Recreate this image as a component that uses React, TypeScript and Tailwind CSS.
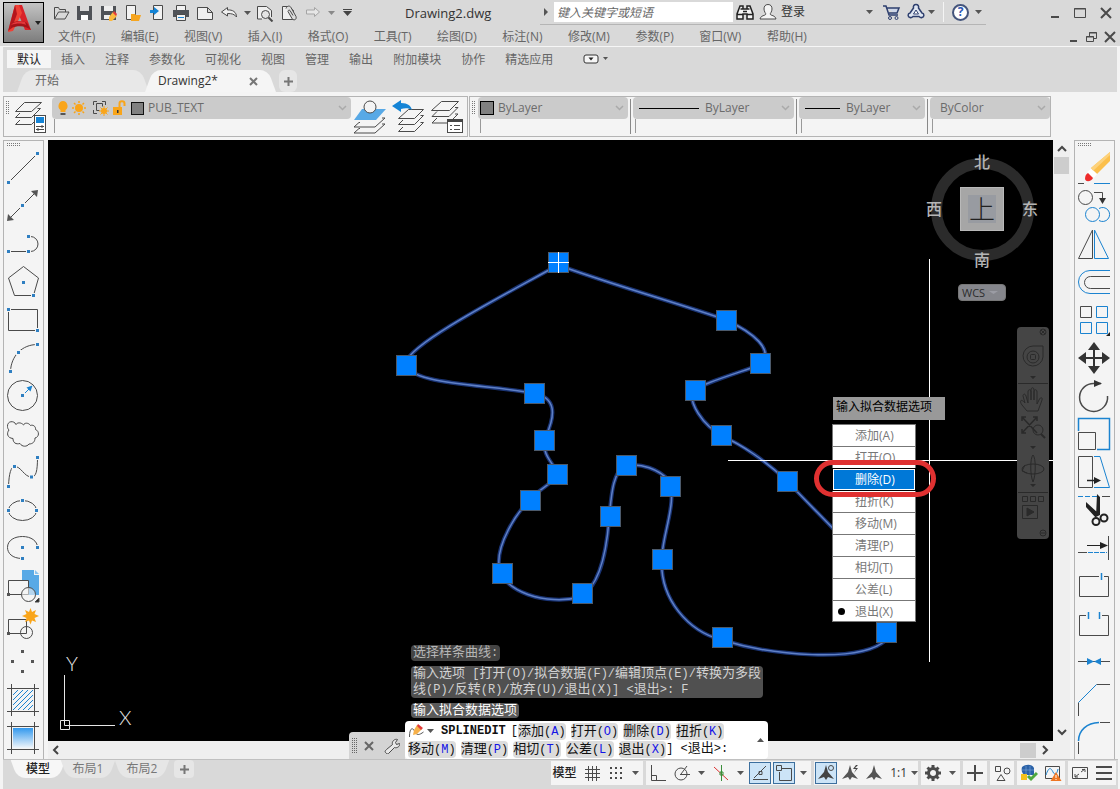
import React, { useState } from 'react';

const INK = '#4a4a4a';
const BLUE = '#1b83d0';

interface IconProps {
  w?: number;
  h?: number;
  children: React.ReactNode;
}

// outline icon used in the title bar and the status bar
function Icon({ w = 18, h = 18, children }: IconProps) {
  return (
    <svg width={w} height={h} viewBox={`0 0 ${w} ${h}`} fill="none" stroke={INK} className="shrink-0">
      {children}
    </svg>
  );
}

function Caret() {
  return (
    <svg width="7" height="4" viewBox="0 0 7 4" className="shrink-0">
      <path d="M0 0h7L3.5 4z" fill="#555" />
    </svg>
  );
}

function Chevron({ d }: { d: string }) {
  return (
    <svg width="10" height="10" viewBox="0 0 10 10" fill="none" stroke="#444" strokeWidth="2">
      <path d={d} />
    </svg>
  );
}

// little grip square of the draw tools
function Dot({ x, y, c = '#2f7fc1' }: { x: number; y: number; c?: string }) {
  return <rect x={x - 1.5} y={y - 1.5} width="3" height="3" fill={c} stroke="#f4f4f4" strokeWidth="2" paintOrder="stroke" />;
}

const drawTools: { name: string; icon: React.ReactNode }[] = [
  { name: '直线', icon: <><path d="M4.5 33.5l29-29" /><Dot x={4.5} y={33.5} /><Dot x={33.5} y={4.5} /></> },
  {
    name: '构造线',
    icon: (
      <>
        <path d="M6 31L31 6" />
        <path d="M34 3l-1 7-6-6zM3 34l1-7 6 6z" fill="#555" stroke="none" />
        <Dot x={18.5} y={18.5} />
      </>
    ),
  },
  {
    name: '多段线',
    icon: (
      <>
        <path d="M4.5 26.5h22a7.5 7.5 0 0 0 0-15h-2" />
        <Dot x={24.5} y={11.5} /><Dot x={4.5} y={26.5} /><Dot x={24.5} y={26.5} />
      </>
    ),
  },
  { name: '多边形', icon: <><path d="M19.5 3.5l15 11.5-5 17.5h-19L4.5 15z" /><Dot x={19.5} y={19.5} /><Dot x={29.5} y={32.5} /></> },
  { name: '矩形', icon: <><path d="M4.5 8.5h29v21h-29z" /><Dot x={4.5} y={8.5} /><Dot x={33.5} y={29.5} /></> },
  { name: '圆弧', icon: <><path d="M6.5 32.5C7 17 18 5.5 33.5 5.5" /><Dot x={6.5} y={32.5} /><Dot x={14.5} y={13.5} /><Dot x={33.5} y={5.5} /></> },
  {
    name: '圆',
    icon: (
      <>
        <circle cx="18.5" cy="18.5" r="15" />
        <path d="M18.5 18.5l7-7" stroke={BLUE} />
        <path d="M28.5 8.5l-2 6-4-4z" fill={BLUE} stroke="none" />
        <Dot x={18.5} y={18.5} />
      </>
    ),
  },
  {
    name: '修订云线',
    icon: <path d="M12 9.5C10 5 3 6 3.5 11.5C3.5 13 4 14 5 15C2.5 18 3 23 9 23.5C9 28 12 29.5 16 28.5C18 32 23 32 25 29C28.5 29 31 27 31 23C35.5 22 35.5 16 31.5 14.5C32 11 28.5 9.5 26.5 10.5C24.5 7.5 20.5 7.5 19.5 10C17 7 13 7.5 12 9.5z" />,
  },
  {
    name: '样条曲线',
    icon: (
      <>
        <path d="M4.5 33.5C5 20 7 14 10.5 13.5C17 13 20 24 27.5 24C32 24 33.5 18 33.5 4.5" />
        <Dot x={4.5} y={33.5} /><Dot x={10.5} y={13.5} /><Dot x={27.5} y={24} /><Dot x={33.5} y={4.5} />
      </>
    ),
  },
  {
    name: '椭圆',
    icon: <><ellipse cx="18.5" cy="19.5" rx="14" ry="10" /><Dot x={4.5} y={19.5} /><Dot x={32.5} y={19.5} /><Dot x={18.5} y={9.5} /></>,
  },
  {
    name: '椭圆弧',
    icon: <><path d="M18.5 29.5C8 29.5 3.5 24 3.5 18.5C3.5 11 11 7.5 18.5 7.5C27 7.5 33.5 12 33.5 18.5" /><Dot x={18.5} y={18.5} /><Dot x={33.5} y={18.5} /><Dot x={18.5} y={29.5} /></>,
  },
  {
    name: '插入块',
    icon: (
      <>
        <path d="M18 3h12v5h5v20H24V13h-6z" fill="#58a9e6" stroke="none" />
        <path d="M31 3l4 4h-4z" fill="#8cc4ef" stroke="none" />
        <path d="M4.5 13.5h20v14h-20z" />
        <circle cx="24.5" cy="27.5" r="7" fill="#f4f4f4" fillOpacity=".6" />
        <rect x="3" y="26" width="3" height="3" fill="#555" stroke="none" />
        <path d="M35 31v4h-4z" fill="#222" />
      </>
    ),
  },
  {
    name: '创建块',
    icon: (
      <>
        <path d="M4.5 14.5h18v14h-18z" />
        <circle cx="22.5" cy="27.5" r="6" />
        <rect x="3" y="27" width="3" height="3" fill="#555" stroke="none" />
        <path d="M26.5 3l1.5 4 4-2-1.5 4 4.5 2-4.5 2 1.5 4-4-1.5-1.5 4-1.5-4-4 1.5 1.5-4-4.5-2 4.5-2-1.5-4 4 2z" fill="#f9a51a" stroke="none" />
      </>
    ),
  },
  { name: '点', icon: <><Dot x={18.5} y={8.5} c="#555" /><Dot x={8.5} y={18.5} c="#555" /><Dot x={28.5} y={18.5} c="#555" /><Dot x={18.5} y={28.5} c="#555" /></> },
  {
    name: '图案填充',
    icon: (
      <>
        <path d="M3 7.5h32M3 30.5h32M7.5 3v32M30.5 3v32" />
        <path d="M9 14l5-5M9 19L19 9M9 24L24 9M9 29L29 9M14 29l15-15M19 29l10-10M24 29l5-5" stroke={BLUE} />
      </>
    ),
  },
  {
    name: '渐变色',
    icon: (
      <>
        <defs>
          <linearGradient id="fade" x1="0" y1="0" x2="0" y2="1">
            <stop offset="0" stopColor="#3399ee" />
            <stop offset="1" stopColor="#f0f6fb" />
          </linearGradient>
        </defs>
        <rect x="9" y="9" width="20" height="20" fill="url(#fade)" stroke="none" />
        <path d="M3 7.5h32M3 30.5h32M7.5 3v32M30.5 3v32" />
      </>
    ),
  },
];

const modifyTools: { name: string; icon: React.ReactNode }[] = [
  {
    name: '删除',
    icon: (
      <>
        <path d="M3 34.5h6" /><path d="M19 34.5h16" stroke={BLUE} />
        <path d="M35 3v9L22 25l-6-6z" fill="#fbbf4b" stroke="none" />
        <path d="M35 3v3L18 22l-2-3z" fill="#fdd27c" stroke="none" />
        <path d="M16 20l6 5-3 4-7-6z" fill="#fff" stroke="none" />
        <path d="M13 24l5 5c-1 3-7 5-8 1 0-3 1-5 3-6z" fill="#ee2b2b" stroke="none" />
      </>
    ),
  },
  {
    name: '复制',
    icon: (
      <>
        <circle cx="10.5" cy="10.5" r="7" />
        <path d="M19 5.5h8.5v7" /><path d="M24 11h7l-3.5 6z" fill="#333" stroke="none" />
        <g stroke={BLUE}><circle cx="17.5" cy="27.5" r="7" /><path d="M24 21.5a7 7 0 1 1 0 12" /></g>
      </>
    ),
  },
  { name: '镜像', icon: <><path d="M17.5 5v28.5h-14z" /><path d="M19.5 5v28.5h14z" stroke={BLUE} /></> },
  { name: '偏移', icon: <><path d="M35 7.5H15a11.5 11.5 0 0 0 0 23h20" stroke={BLUE} /><path d="M35 13.5H15.5a6 6 0 0 0 0 12H35" /></> },
  {
    name: '阵列',
    icon: <><path d="M5.5 5.5h11v11h-11z" /><path d="M21.5 5.5h11v11h-11zM5.5 21.5h11v11h-11zM21.5 21.5h11v11h-11z" stroke={BLUE} /><path d="M35 31v4h-4z" fill="#222" stroke="none" /></>,
  },
  {
    name: '移动',
    icon: <><path d="M19 8v22M8 19h22" stroke="#333" strokeWidth="2" /><path d="M19 3l6 8H13zM19 35l6-8H13zM3 19l8-6v12zM35 19l-8-6v12z" fill="#333" stroke="none" /></>,
  },
  { name: '旋转', icon: <><path d="M32.5 19A14 14 0 1 1 20 6.5h6" strokeWidth="1.5" /><path d="M19 3l8 3.5-8 3.5z" fill="#333" stroke="none" /></> },
  { name: '缩放', icon: <><path d="M3.5 16V3.5h31v31H22" stroke={BLUE} strokeWidth="1.5" /><path d="M3.5 17.5h17v17h-17z" /></> },
  {
    name: '拉伸',
    icon: (
      <>
        <path d="M3.5 3.5h14v31h-14z" />
        <path d="M19 3.5h6l9.5 31H19" stroke={BLUE} />
        <path d="M12 27.5h9" stroke="#222" strokeWidth="1.5" /><path d="M19 24l7 3.5-7 3.5z" fill="#222" stroke="none" />
      </>
    ),
  },
  {
    name: '修剪',
    icon: (
      <>
        <path d="M3 5.5h19" stroke={BLUE} strokeDasharray="5 2" /><path d="M27 5.5h8" />
        <path d="M22 3l3 3v18l-4 2zM11 11l12 11-2 5L11 16z" fill="#222" stroke="none" />
        <circle cx="21" cy="30.5" r="3.5" stroke="#222" strokeWidth="2" />
        <circle cx="29" cy="27" r="3.5" stroke="#222" strokeWidth="2" />
      </>
    ),
  },
  {
    name: '延伸',
    icon: (
      <>
        <path d="M33.5 7v24M3 23.5h9" /><path d="M13 23.5h19" stroke={BLUE} strokeDasharray="5 1" />
        <path d="M12 16.5h15" stroke="#222" /><path d="M25 13l8 3.5-8 3.5z" fill="#222" stroke="none" />
      </>
    ),
  },
  { name: '打断于点', icon: <><path d="M24 9.5H4.5v20h29v-20H29" /><path d="M26.5 6v7" stroke={BLUE} strokeWidth="1.5" /></> },
  { name: '打断', icon: <><path d="M11 10.5H4.5v20h29v-20H27" /><path d="M13.5 7v7M24.5 7v7" stroke={BLUE} strokeWidth="1.5" /></> },
  { name: '合并', icon: <><path d="M3 18.5h32" /><path d="M12 15l7 3.5-7 3.5zM26 15l-7 3.5 7 3.5z" fill={BLUE} stroke="none" /></> },
  { name: '倒角', icon: <><path d="M35 3.5H21.5M3.5 21.5V35" /><path d="M21.5 3.5l-18 18" stroke={BLUE} /></> },
  { name: '圆角', icon: <><path d="M35 3.5H25M3.5 23v12" /><path d="M24 3.5C12 4 3.5 11 3.5 22" stroke={BLUE} strokeWidth="1.5" /></> },
];

function ToolColumn({ tools, label }: { tools: { name: string; icon: React.ReactNode }[]; label: string }) {
  return (
    <div role="toolbar" aria-label={label} className="w-[41px] shrink-0 overflow-hidden border border-b-0 border-[#b4b4b4] bg-[#f4f4f4]">
      <div className="h-2 pt-[2px] pl-[3px]">
        <svg width="14" height="4" viewBox="0 0 14 4" stroke="#777">
          <path d="M0 .5h14M0 2.5h14" strokeDasharray="1 1" />
        </svg>
      </div>
      {tools.map((tool) => (
        <button key={tool.name} aria-label={tool.name} className="block h-[38px] w-full">
          <svg width="39" height="38" viewBox="0 0 39 38" fill="none" stroke={INK}>
            {tool.icon}
          </svg>
        </button>
      ))}
    </div>
  );
}

const quickIcons: { name: string; icon: React.ReactNode }[] = [
  { name: '打开', icon: <path d="M2.5 15V3.5h4l1 2h6V8M2.5 15l4-7H17l-4 7z" /> },
  { name: '保存', icon: <><path d="M1 2h15v14H1z" fill="#4f5257" stroke="none" /><path d="M4 2h9v5H4z" fill="#d9d9d9" stroke="none" /><path d="M5 11h7v5H5z" fill="#fff" stroke="none" /></> },
  {
    name: '另存为',
    icon: (
      <>
        <path d="M1 2h15v14H1z" fill="#4f5257" stroke="none" /><path d="M4 2h9v5H4zM4 11h6v4H4z" fill="#eee" stroke="none" />
        <path d="M13 8l4 4-5 5H9v-4z" fill="#fbb93f" stroke="none" /><path d="M14 7l3 3-1 2-3-3z" fill="#e23b3b" stroke="none" />
      </>
    ),
  },
  { name: '从Web打开', icon: <><path d="M2.5 1.5h9v14h-9z" fill="#f2f2f2" /><path d="M7 10h4l1 1h5l-2 6H7z" fill="#f6a51f" stroke="none" /></> },
  { name: '保存到Web', icon: <><path d="M5.5 1.5h9v14h-9z" fill="#f2f2f2" /><path d="M2 6h4V3l5 4-5 4V9H2z" fill="#1484d6" stroke="none" /></> },
  { name: '打印', icon: <><path d="M4.5 6V1.5h9V6" fill="#f2f2f2" /><path d="M1 6h16v7H1z" fill="#4f5257" stroke="none" /><path d="M4.5 10.5h9v6h-9z" fill="#f2f2f2" /><path d="M6 13.5h6" stroke={BLUE} /></> },
  { name: '新建', icon: <path d="M1.5 3.5h10l5 5v7h-15zM11.5 3.5v5h5" fill="#efefef" /> },
  { name: '放弃', icon: <path d="M1.5 8l6-4.5V6c5-.5 9 2 9 7-2-3-5-3.5-9-3.5v2.5z" fill="#efefef" /> },
];

const quickIcons2: { name: string; icon: React.ReactNode }[] = [
  { name: '打印预览', icon: <><path d="M6 15H1.5V2.5h9l5 4V13" fill="#efefef" /><circle cx="9.5" cy="10.5" r="4" fill="#e4e4e4" /><path d="M12.5 13.5l4 4" strokeWidth="2" /></> },
  { name: '附着', icon: <><path d="M2.5 15.5v-13h6l5 4v9z" fill="#efefef" /><path d="M6 4.5c1-3 4-3 5-1l5 9c1 4-3 4-4 2L8 7.5c0-1 1-2 2-1l3 5" fill="#ddd" /></> },
  { name: '重做', icon: <path d="M15.5 8l-5-4.5V6H2.5v4h8v2.5z" fill="#e6e6e6" stroke="#a5a5a5" /> },
];

const menus = ['文件(F)', '编辑(E)', '视图(V)', '插入(I)', '格式(O)', '工具(T)', '绘图(D)', '标注(N)', '修改(M)', '参数(P)', '窗口(W)', '帮助(H)'];
const ribbonTabs = ['默认', '插入', '注释', '参数化', '可视化', '视图', '管理', '输出', '附加模块', '协作', '精选应用'];

function TitleBar() {
  return (
    <header className="flex h-[46px] shrink-0 bg-[#d9d9d9] pl-[3px]">
      <button aria-label="应用程序菜单" className="mt-[2px] flex h-[41px] w-[41px] shrink-0 items-center border border-black bg-gradient-to-b from-[#c4c4c4] to-[#7d7d7d]">
        <svg width="39" height="39" viewBox="0 0 39 39">
          <path d="M11 2h7l9 25h-6z" fill="#d92229" />
          <path d="M11 2h4l3 8-9 18-5 1z" fill="#ef4136" />
          <path d="M11 2L4 28l4-3 5-14z" fill="#b5161c" />
          <path d="M8 20c6-3 12-2 15 0l4 7c-5-4-12-5-20-2z" fill="#a51319" />
          <path d="M9 20c5-2 9-2 12-1l1 3c-4-2-9-2-15 0z" fill="#e2363a" />
          <path d="M31 18h6l-3 4z" fill="#222" />
        </svg>
      </button>
      <div className="flex min-w-0 flex-1 flex-col">
        <div className="flex h-[25px] shrink-0 items-center">
          <div className="flex shrink-0 items-center pl-[5px]">
            {quickIcons.map((q) => (
              <button key={q.name} aria-label={q.name} className="flex w-6 justify-center"><Icon>{q.icon}</Icon></button>
            ))}
            <button aria-label="放弃列表" className="flex w-3 justify-center"><Caret /></button>
            {quickIcons2.map((q) => (
              <button key={q.name} aria-label={q.name} className="flex w-6 justify-center"><Icon>{q.icon}</Icon></button>
            ))}
            <button aria-label="重做列表" className="flex w-3 justify-center opacity-60"><Caret /></button>
            <button aria-label="自定义快速访问工具栏" className="flex w-5 justify-center">
              <svg width="9" height="7" viewBox="0 0 9 7"><path d="M0 0h9v1H0zM0 2h9L4.5 7z" fill="#444" /></svg>
            </button>
          </div>
          <h1 className="ml-[48px] w-[135px] shrink-0 text-[13px] leading-4 text-[#333]">Drawing2.dwg</h1>
          <div className="flex h-full items-center border-b border-[#b5b5b5]">
            <svg width="14" height="8" viewBox="0 0 14 8"><path d="M4 0v8l4-4z" fill="#555" /></svg>
            <input aria-label="搜索" placeholder="键入关键字或短语" className="h-5 w-[179px] bg-white pl-[3px] text-xs italic placeholder:text-[#666]" />
            <button aria-label="查找" className="ml-[2px] flex w-5 justify-center">
              <Icon><path d="M4 3h3v3h4V3h3l3 8v5h-6v-5H7v5H1v-5zM1 11.5h6M11 11.5h6M7 8.5h4M4.5 6h2M11.5 6h2" fill="#f5f5f5" stroke="#222" strokeWidth="1.5" /></Icon>
            </button>
            <button className="ml-1 flex items-center gap-1 text-xs leading-4 text-[#333]">
              <Icon><path d="M9 1.5c3 0 4 2 4 4.5S11 11 11 11c1 2 5 1 6 5H1c1-4 5-3 6-5 0 0-2-2.5-2-5s1-4.5 4-4.5z" fill="#f5f5f5" /></Icon>
              登录
            </button>
            <button aria-label="帐户" className="ml-[60px] flex w-2 justify-center"><Caret /></button>
            <button aria-label="应用商店" className="ml-[10px]">
              <Icon><path d="M0 3h3l3 9h9M4 5h12l-2 5H6" stroke="#2e3f6e" strokeWidth="1.5" fill="#cdd6e8" /><circle cx="7" cy="15" r="1.5" stroke="#2e3f6e" /><circle cx="13.5" cy="15" r="1.5" stroke="#2e3f6e" /></Icon>
            </button>
            <button aria-label="保持连接" className="ml-[6px] flex items-center gap-[3px]">
              <Icon>
                <path d="M9 1.5c2 0 3 1.500 2.5 3.500l3.500 5c2.500.5 2.500 4 0 4.500-1.500.5-2.500-.5-3-1H6c-.5.5-1.500 1.500-3 1-2.500-.5-2.500-4 0-4.500l3.500-5C6 3 7 1.500 9 1.500z" stroke="#2e3f6e" strokeWidth="1.5" fill="#dfe6f2" />
                <path d="M9 7l-2.500 4h5z" stroke="#2e3f6e" fill="#fff" />
              </Icon>
              <Caret />
            </button>
            <div className="mx-2 h-5 w-px bg-[#f4f4f4]" />
            <button aria-label="帮助" className="flex items-center gap-[6px] pr-1">
              <span className="flex size-[17px] items-center justify-center rounded-full border-2 border-[#44557c] bg-white text-xs font-bold text-[#2b55b4]">?</span>
              <Caret />
            </button>
          </div>
          <div className="ml-auto flex items-center gap-[13px] pr-2">
            <button aria-label="最小化"><Icon w={10} h={14}><path d="M1 11h8" strokeWidth="2" /></Icon></button>
            <button aria-label="最大化"><Icon w={14} h={14}><path d="M1.5 2.5h11v9h-11zM1 3h12" /></Icon></button>
            <button aria-label="关闭"><Icon w={12} h={12}><path d="M1 1l10 10M11 1L1 11" strokeWidth="2" /></Icon></button>
          </div>
        </div>
        <div className="flex flex-1 items-center pt-[2px]">
          <nav className="ml-[14px] flex w-[749px] justify-between text-xs leading-4 text-[#666]">
            {menus.map((m) => (
              <button key={m} className="whitespace-nowrap">{m}</button>
            ))}
          </nav>
          <div className="ml-auto flex items-center gap-[6px] pr-1">
            <button aria-label="最小化图形"><Icon w={10} h={12}><path d="M1 10h7" strokeWidth="2" /></Icon></button>
            <button aria-label="还原图形"><Icon w={13} h={12}><path d="M1.5 5.5h7v5h-7zM4.5 5V1.5h7v6H9M1 6h8M4 2h8" /></Icon></button>
            <button aria-label="关闭图形"><Icon w={12} h={12}><path d="M1 1l10 10M11 1L1 11" strokeWidth="2" /></Icon></button>
          </div>
        </div>
      </div>
    </header>
  );
}

function Ribbon() {
  const [active, setActive] = useState('默认');
  return (
    <div className="mr-[3px] ml-[3px] flex h-[46px] shrink-0 flex-col border-t border-[#f6f6f6] bg-[#d9d9d9]">
      <div className="flex h-[23px] items-center pl-1 text-xs text-[#666]">
        {ribbonTabs.map((t) => (
          <button
            key={t}
            onClick={() => setActive(t)}
            className={t === active ? 'h-[18px] bg-[#f5f5f5] px-[10px] leading-[20px] text-[#222]' : 'h-[18px] px-[10px] leading-[20px]'}
          >
            {t}
          </button>
        ))}
        <button aria-label="最小化功能区" className="ml-5 flex items-center gap-1">
          <svg width="16" height="10" viewBox="0 0 16 10">
            <rect x="1" y="1" width="14" height="8" rx="2" fill="#f5f5f5" stroke="#333" />
            <path d="M5.5 3.5h5L8 6.5z" fill="#222" />
          </svg>
          <svg width="5" height="3" viewBox="0 0 5 3"><path d="M0 0h5L2.5 3z" fill="#555" /></svg>
        </button>
      </div>
      <div className="flex flex-1 items-stretch pl-[18px] text-xs leading-[22px] text-[#666]">
        <button className="relative isolate w-[124px] pl-[14px] text-left before:absolute before:inset-y-0 before:left-0 before:-z-10 before:w-3/5 before:-skew-x-[20deg] before:rounded-tl-lg before:bg-[#e8e8e8] after:absolute after:inset-y-0 after:right-0 after:-z-10 after:w-3/5 after:skew-x-[20deg] after:rounded-tr-lg after:bg-[#e8e8e8]">
          开始
        </button>
        <div className="relative isolate ml-[4px] flex w-[123px] items-center pl-[9px] text-[#333] before:absolute before:inset-y-0 before:left-0 before:-z-10 before:w-3/5 before:-skew-x-[20deg] before:rounded-tl-lg before:bg-[#f5f5f5] after:absolute after:inset-y-0 after:right-0 after:-z-10 after:w-3/5 after:skew-x-[20deg] after:rounded-tr-lg after:bg-[#f5f5f5]">
          <button>Drawing2*</button>
          <button aria-label="关闭选项卡" className="mr-[14px] ml-auto"><Icon w={9} h={9}><path d="M1 1l7 7M8 1L1 8" strokeWidth="2" stroke="#777" /></Icon></button>
        </div>
        <button aria-label="新图形" className="ml-[7px] flex w-[18px] items-center justify-center rounded-md bg-[#e6e6e6]">
          <Icon w={9} h={9}><path d="M4.5 0v9M0 4.5h9" strokeWidth="2" stroke="#777" /></Icon>
        </button>
      </div>
    </div>
  );
}

interface PickerProps {
  label: string;
  value: string;
  className: string;
  children?: React.ReactNode;
}

function Picker({ label, value, className, children }: PickerProps) {
  return (
    <div className={`flex h-full flex-col ${className}`}>
      <label className="flex h-[22px] items-center gap-1 rounded-sm bg-[#cbcbcb] pr-1">
        {children}
        <select aria-label={label} className="min-w-0 flex-1 appearance-none text-xs leading-5 text-[#6b6b6b]">
          <option>{value}</option>
        </select>
        <Icon w={9} h={6}><path d="M1 1l3.5 3.5L8 1" stroke="#aaa" strokeWidth="1.5" /></Icon>
      </label>
      <div className="ml-[2px] h-[14px] border-l border-[#999]" />
    </div>
  );
}

function Grip() {
  return (
    <svg width="4" height="14" viewBox="0 0 4 14" stroke="#777" className="mx-[2px] mt-1 shrink-0">
      <path d="M.5 0v14M2.5 0v14" strokeDasharray="1 1" />
    </svg>
  );
}

function Divider() {
  return <div className="mx-[2px] h-[35px] w-px shrink-0 self-center bg-[#888]" />;
}

function SheetIcon({ children }: { children: React.ReactNode }) {
  return (
    <svg width="36" height="36" viewBox="0 0 36 36" fill="none" stroke={INK}>
      {children}
    </svg>
  );
}

function PropertyBar() {
  return (
    <div className="flex h-[41px] shrink-0 gap-px pl-[3px]">
      <div className="flex w-[465px] border border-[#b4b4b4] bg-[#f4f4f4]">
        <Grip />
        <button aria-label="图层特性" className="w-10 shrink-0">
          <SheetIcon>
            <path d="M12.5 3.5h17l-10 9h-16zM8 14l-4.5 4.500h16l9-9h-3M8 21l-4.5 4.500h16l9-9h-3" />
            <rect x="22.5" y="16.500" width="11" height="17" fill="#fff" />
            <path d="M24 18h8v6h-8z" fill="#1484d6" stroke="none" />
            <path d="M24 27.5h8M30 26v3M24 30.5h8M26 29v3" />
          </SheetIcon>
        </button>
        <Picker label="图层" value="PUB_TEXT" className="w-[300px]">
          <svg width="92" height="20" viewBox="0 0 92 20" fill="none" className="shrink-0">
            <path d="M11 3a5 5 0 0 1 2.500 9v2h-5v-2A5 5 0 0 1 11 3z" fill="#f9a51a" />
            <path d="M8.500 15h5v2h-5z" fill="#555" />
            <circle cx="27" cy="10" r="4" fill="#f9a51a" />
            <path d="M27 3v2M27 15v2M20 10h2M32 10h2M22 5l1.500 1.500M30.500 13.500L32 15M32 5l-1.500 1.500M23.500 13.500L22 15" stroke="#f9a51a" strokeWidth="1.5" />
            <path d="M41.5 7V3.500H45M50 3.500h3.500V7M41.5 12v3.500H45M44.5 5.500h6v3M44.5 5.500v7h3" stroke={INK} />
            <circle cx="52" cy="13" r="3" fill="#f9a51a" />
            <path d="M52 8v10M47 13h10M48.5 9.500l7 7M55.5 9.500l-7 7" stroke="#f9a51a" />
            <path d="M61 9h9v8h-9z" fill="#f9a51a" /><path d="M67.5 9V5.500c0-3 5-3 5 0V8" stroke="#f9a51a" strokeWidth="2" />
            <path d="M65 12h1.500v3H65z" fill="#333" />
            <rect x="79.5" y="4.500" width="12" height="12" fill="#808080" stroke="#111" />
          </svg>
        </Picker>
        <button aria-label="将对象的图层设为当前" className="w-[39px] shrink-0 pl-[2px]">
          <SheetIcon>
            <path d="M9 10h24L23 21H1z" fill="#58a9e6" stroke="none" />
            <path d="M7 23.500h-1l-5 4.500h21l10-9h-3M7 29.500h-1l-5 4.500h21l10-9h-3" />
            <circle cx="17" cy="8" r="6" fill="#f4f4f4" />
          </SheetIcon>
        </button>
        <button aria-label="上一个图层" className="w-[39px] shrink-0 pl-[2px]">
          <SheetIcon>
            <path d="M16.5 10.500h15l-9 9h-16zM11 21l-4.500 4.500h16l9-9h-3M11 28l-4.500 4.500h16l9-9h-3" />
            <path d="M0 7l9-6v3c7 0 10 3 11 7-3-2-7-2-11-1v3z" fill="#1484d6" stroke="none" />
          </SheetIcon>
        </button>
        <button aria-label="图层状态管理器" className="w-[38px] shrink-0 pl-[2px]">
          <SheetIcon>
            <path d="M10.5 2.500h17l-9 9h-18zM6 12.500l-5 5h17l9-9h-3M6 19l-5 5h17l9-9h-3" />
            <rect x="16.5" y="20.500" width="15" height="13" fill="#fff" />
            <path d="M16 20h16v3H16z" fill="#444" stroke="none" />
            <path d="M19 26.500h2M23 26.500h6M19 30.500h2M23 30.500h6" />
          </SheetIcon>
        </button>
      </div>
      <div className="flex w-[582px] border border-[#b4b4b4] bg-[#f4f4f4]">
        <Grip />
        <Picker label="颜色" value="ByLayer" className="w-[150px]">
          <span className="ml-[2px] size-[14px] shrink-0 border border-black bg-[#808080]" />
        </Picker>
        <Divider />
        <Picker label="线型" value="ByLayer" className="w-[161px]">
          <span className="mr-[2px] ml-[6px] h-px w-[60px] shrink-0 bg-black" />
        </Picker>
        <Divider />
        <Picker label="线宽" value="ByLayer" className="w-[126px]">
          <span className="mr-[2px] ml-[6px] h-px w-[35px] shrink-0 bg-black" />
        </Picker>
        <Divider />
        <Picker label="打印样式" value="ByColor" className="min-w-0 flex-1 *:first:pl-[10px]" />
      </div>
    </div>
  );
}

const grips = [
  [406, 365], [534, 393], [544, 440], [557, 474], [530, 500], [502, 573], [582, 593], [610, 516], [626, 465], [670, 486],
  [662, 559], [722, 637], [886, 632], [787, 481], [721, 435], [695, 390], [760, 363], [726, 320], [558, 262],
];

const splinePath =
  'M558 265C510 292 412 342 406 362C404 384 480 384 534 393C556 398 556 414 546 436C540 448 549 460 555 468C564 480 540 486 530 500' +
  'C515 514 497 545 499 565C500 592 548 606 580 597C602 585 607 545 609 520C611 500 612 470 626 466C640 462 660 470 668 480' +
  'C678 498 664 530 662 555C658 600 690 632 722 640C770 655 860 664 886 640C905 590 850 548 787 481C765 460 740 444 724 437' +
  'C700 424 690 402 692 392C700 384 735 374 760 365C776 350 752 332 726 320C690 307 610 284 558 265z';

function Drawing() {
  return (
    <svg width="1005" height="601" viewBox="48 140 1005 601" fill="none" className="absolute top-0 left-0">
      <path d={splinePath} stroke="#1a3474" strokeWidth="4" />
      <path d={splinePath} stroke="#5f80c6" strokeWidth="1.5" />
      {grips.map(([x, y]) => (
        <rect key={`${x}-${y}`} x={x - 9.5} y={y - 9.5} width="20" height="20" fill="#0080ff" stroke="#4c5a6b" />
      ))}
      <path d="M558.5 252v21M548 262.5h21" stroke="#fff" />
      <path d="M929.5 259v403M728 460.5h325" stroke="#fff" />
      <path d="M64.5 675v50.500H115M60.5 720.5h9v9h-9z" stroke="#e6e6e6" />
      <text x="66" y="671" fontSize="20" fontWeight="300" fill="#e6e6e6" className="font-[Lato]">Y</text>
      <text x="119" y="725" fontSize="20" fontWeight="300" fill="#e6e6e6" className="font-[Lato]">X</text>
    </svg>
  );
}

function Compass() {
  return (
    <div className="absolute top-3 right-[14px] flex w-[114px] flex-col items-center">
      <div className="relative flex size-[114px] items-center justify-center text-base leading-4 font-medium text-[#b5b5b5]">
        <div className="absolute size-[103px] rounded-full border-[11px] border-[#2b2b2b]" />
        <span className="absolute top-[2px]">北</span>
        <span className="absolute -bottom-[2px]">南</span>
        <span className="absolute left-px">西</span>
        <span className="absolute right-px">东</span>
        <div className="flex size-11 items-center justify-center border border-[#b9b9b9] bg-[#a6a6a6]">
          <span className="flex size-7 items-center justify-center bg-[#989ba1] text-[26px] leading-7 font-light text-[#222]">上</span>
        </div>
      </div>
      <button className="mt-[18px] flex h-[17px] w-12 items-center gap-1 rounded border border-[#777] bg-[#85868c] pl-[3px] text-[11px] leading-4 text-[#2c2c2c]">
        WCS
        <svg width="9" height="5" viewBox="0 0 9 5"><path d="M0 1h9L4.5 4z" fill="#9b9ca4" /></svg>
      </button>
    </div>
  );
}

function NavBar() {
  return (
    <div className="absolute top-[187px] right-1 w-8 rounded bg-[#454545]">
      <svg width="32" height="212" viewBox="0 0 32 212" fill="none" stroke="#2a2a2a">
        <circle cx="26" cy="5" r="3" /><path d="M24 3l4 4M28 3l-4 4" />
        <path d="M16 19h10v11a10 10 0 1 1-10-11z" /><circle cx="16" cy="30" r="6" /><rect x="13.5" y="27.500" width="5" height="5" rx="1" />
        <path d="M13 49h6l-3 3zM13 119h6l-3 3zM13 157h6l-3 3z" fill="#2a2a2a" stroke="none" />
        <path d="M1 56.500h30" />
        <path d="M8 76c-4-5-6-2-3 2l5 6h11l4-11c1-3-2-3-3 0l-2 4V65c0-3-3-3-3 0v8-10c0-3-3-3-3 0v10-8c0-3-3-3-3 0v11l-2-7c-1-3-3-2-3 0z" />
        <path d="M5 90l15 16M20 90L5 106M5 94v-4h4M16 90h4v4M5 102v4h4" strokeWidth="1.5" /><circle cx="21" cy="103" r="5" /><path d="M24 107l4 4" strokeWidth="2" />
        <path d="M16 128c-3 3-3 20 0 27M16 128c3 3 3 20 0 27" /><ellipse cx="16" cy="142" rx="11" ry="5" /><path d="M8 138l-3 6 5 2" />
        <path d="M5.5 169.500h5v5h-5zM13.5 169.500h5v5h-5zM21.5 169.500h5v5h-5zM5.5 178.500h15v13h-15z" /><path d="M10 181l7 4-7 4z" fill="#2a2a2a" />
        <path d="M1 165.500h30" /><circle cx="26" cy="206" r="3" /><path d="M24 206h4" />
      </svg>
    </div>
  );
}

const options = ['添加(A)', '打开(O)', '删除(D)', '扭折(K)', '移动(M)', '清理(P)', '相切(T)', '公差(L)', '退出(X)'];

function DynamicInput() {
  const [picked, setPicked] = useState('删除(D)');
  return (
    <div className="absolute top-[257px] left-[784px] w-[84px]">
      <div className="mb-1 ml-px h-[23px] w-28 bg-[#999] pl-[3px] text-xs leading-5 text-black">输入拟合数据选项</div>
      <ul role="menu" className="border border-[#777] bg-white">
        {options.map((o) => (
          <li key={o} className="h-[22px] border-b border-[#777] last:h-5 last:border-b-0">
            <button
              role="menuitem"
              onClick={() => setPicked(o)}
              className={
                o === picked
                  ? 'relative block h-[21px] w-full border border-white bg-[#0078d7] pl-[21px] text-left text-xs leading-[19px] text-white outline outline-black'
                  : 'relative block h-[21px] w-full pl-[22px] text-left text-xs leading-[21px] text-[#777]'
              }
            >
              {o === '退出(X)' && <span className="absolute top-[7px] left-[5px] size-[7px] rounded-full bg-black" />}
              {o}
            </button>
          </li>
        ))}
      </ul>
      <div className="pointer-events-none absolute top-[63px] -left-[18px] h-[37px] w-[122px] rounded-full border-[5px] border-[#e03131]" />
    </div>
  );
}

// Latin runs are set one step smaller so that two of them stay close to one Han character
function Mono({ text }: { text: string }) {
  return (
    <>
      {text.split(/([\x20-\x7e]+)/).map((part, i) => (
        <span key={i} className={i % 2 ? 'text-xs' : undefined}>{part}</span>
      ))}
    </>
  );
}

function CommandOption({ label, hot }: { label: string; hot: string }) {
  return (
    <button className="rounded-sm bg-[#dcdcdc] leading-[17px]">
      {label}<span className="text-xs">(<span className="text-[#1414e6]">{hot}</span>)</span>
    </button>
  );
}

function CommandLine() {
  return (
    <div className="absolute bottom-0 left-[301px] flex items-end font-['Liberation_Mono','Noto_Sans_CJK_SC',monospace] text-[13px]">
      <div className="flex h-[27px] w-14 items-center rounded-tl bg-[#d4d4d4] pl-[3px]">
        <svg width="6" height="16" viewBox="0 0 6 16" stroke="#666">
          <path d="M.5 0v16M2.5 0v16M4.5 0v16" strokeDasharray="1 1" />
        </svg>
        <button aria-label="关闭命令行" className="ml-[6px]"><Icon w={10} h={10}><path d="M1 1l8 8M9 1L1 9" strokeWidth="2" stroke="#666" /></Icon></button>
        <button aria-label="自定义" className="ml-[10px]">
          <Icon w={16} h={16}><path d="M1.5 14.500c-1-1 0-2 1-3l6-5c-1-3 2-6 5-5l-2 3 1 2 3-1c1 3-3 5-5 4l-6 6c-1 1-2 0-3-1z" fill="#e8e8e8" /></Icon>
        </button>
      </div>
      <div className="flex flex-col">
        <div className="mb-[3px] ml-[6px] flex flex-col items-start gap-[5px] leading-[15px]">
          <div className="rounded-sm bg-[#444] px-[2px] text-[#b5b5b5]"><Mono text="选择样条曲线:" /></div>
          <div className="rounded-sm bg-[#505050] px-[2px] text-[#d2d2d2]">
            <Mono text="输入选项 [打开(O)/拟合数据(F)/编辑顶点(E)/转换为多段" /><br />
            <Mono text="线(P)/反转(R)/放弃(U)/退出(X)] <退出>: F" />
          </div>
          <div className="rounded-sm bg-[#5a5a5a] px-[2px] text-white">输入拟合数据选项</div>
        </div>
        <div className="flex h-[38px] w-[363px] items-center rounded-sm bg-white pl-[3px] whitespace-nowrap text-[#111]">
          <div className="flex flex-col gap-px">
            <div className="flex h-[17px] items-center gap-[5px]">
              <button aria-label="最近使用的命令" className="flex items-center gap-[3px]">
                <Icon w={16} h={16}>
                  <path d="M1.500 14c0-9 3-10 5-6 2 5 5 4 9 1" stroke="#555" />
                  <path d="M9 2l5 4-5 5-4 1 1-5z" fill="#f6b04a" stroke="none" /><path d="M10 1l5 4-2 2-4-4z" fill="#e23b3b" stroke="none" />
                </Icon>
                <Caret />
              </button>
              <b className="ml-[2px] text-xs">SPLINEDIT</b>
              <span className="-mr-[5px] text-xs">[</span>
              <CommandOption label="添加" hot="A" />
              <CommandOption label="打开" hot="O" />
              <CommandOption label="删除" hot="D" />
              <CommandOption label="扭折" hot="K" />
            </div>
            <div className="flex h-[17px] items-center gap-[5px]">
              <CommandOption label="移动" hot="M" />
              <CommandOption label="清理" hot="P" />
              <CommandOption label="相切" hot="T" />
              <CommandOption label="公差" hot="L" />
              <CommandOption label="退出" hot="X" />
              <span className="-ml-[5px]"><Mono text="] <退出>:" /></span>
            </div>
          </div>
          <button aria-label="命令历史" className="mr-1 ml-auto rotate-180"><Caret /></button>
        </div>
      </div>
    </div>
  );
}

function Workspace() {
  return (
    <div className="relative mr-[4px] ml-1 flex min-w-0 flex-1 flex-col bg-[#efefef]">
      <div className="flex min-h-0 flex-1">
        <main className="relative min-w-0 flex-1 overflow-hidden bg-black">
          <Drawing />
          <Compass />
          <NavBar />
          <DynamicInput />
        </main>
        <div className="flex w-[17px] shrink-0 flex-col items-center py-1">
          <Chevron d="M1 7l4-4 4 4" />
          <div className="mt-[3px] h-[17px] w-[15px] bg-[#cdcdcd]" />
          <span className="mt-auto"><Chevron d="M1 3l4 4 4-4" /></span>
        </div>
      </div>
      <div className="flex h-[18px] shrink-0 items-center pr-5 pl-[3px]">
        <Chevron d="M7 1L3 5l4 4" />
        <div className="mr-1 ml-auto h-[15px] w-4 bg-[#cdcdcd]" />
        <Chevron d="M3 1l4 4-4 4" />
      </div>
      <CommandLine />
    </div>
  );
}

function StatusGroup({ children }: { children: React.ReactNode }) {
  return <div className="flex h-6 items-center bg-[#f4f4f4]">{children}</div>;
}

function StatusButton({ name, on, children }: { name: string; on?: boolean; children: React.ReactNode }) {
  return (
    <button
      aria-label={name}
      className={on ? 'mx-px flex h-[22px] w-[22px] items-center justify-center border border-[#3c6f9e] bg-[#cce4f7]' : 'flex h-[22px] w-6 items-center justify-center'}
    >
      <Icon>{children}</Icon>
    </button>
  );
}

function StatusCaret() {
  return <button aria-label="更多" className="flex h-[22px] w-[15px] items-center justify-center"><Caret /></button>;
}

const scaleMark = 'M9 1l2 7 6 7-6-2-2 3-2-3-6 2 6-7z';

function StatusBar() {
  return (
    <footer className="mr-[2px] ml-[3px] flex h-[30px] shrink-0 items-start border-t border-[#c0c0c0] bg-[#d9d9d9]">
      <div className="flex h-[18px] pl-[11px] text-xs leading-4 text-[#777]">
        <button className="relative isolate w-12 font-medium text-[#222] before:absolute before:inset-y-0 before:left-0 before:-z-10 before:w-3/5 before:skew-x-[20deg] before:rounded-bl-lg before:bg-[#f7f7f7] after:absolute after:inset-y-0 after:right-0 after:-z-10 after:w-3/5 after:-skew-x-[20deg] after:rounded-br-lg after:bg-[#f7f7f7]">模型</button>
        <button className="relative isolate ml-[2px] w-12 before:absolute before:inset-y-0 before:left-0 before:-z-10 before:w-3/5 before:skew-x-[20deg] before:rounded-bl-lg before:bg-[#e6e6e6] after:absolute after:inset-y-0 after:right-0 after:-z-10 after:w-3/5 after:-skew-x-[20deg] after:rounded-br-lg after:bg-[#e6e6e6]">布局1</button>
        <button className="relative isolate ml-[6px] w-12 before:absolute before:inset-y-0 before:left-0 before:-z-10 before:w-3/5 before:skew-x-[20deg] before:rounded-bl-lg before:bg-[#e6e6e6] after:absolute after:inset-y-0 after:right-0 after:-z-10 after:w-3/5 after:-skew-x-[20deg] after:rounded-br-lg after:bg-[#e6e6e6]">布局2</button>
        <button aria-label="新建布局" className="ml-2 flex w-5 items-center justify-center rounded bg-[#e6e6e6]">
          <Icon w={9} h={9}><path d="M4.5 0v9M0 4.5h9" strokeWidth="2" stroke="#777" /></Icon>
        </button>
      </div>
      <div className="ml-auto flex gap-[3px] pt-px pr-[2px]">
        <StatusGroup>
          <button className="mr-[2px] w-[27px] text-xs leading-4 font-medium whitespace-nowrap text-[#222]">模型</button>
          <StatusButton name="栅格"><path d="M5.5 2v15M9.5 2v15M13.5 2v15M2 5.5h15M2 9.5h15M2 13.5h15" /></StatusButton>
          <StatusButton name="捕捉"><path d="M3 4h2M8 4h2M13 4h2M3 9h2M8 9h2M13 9h2M3 14h2M8 14h2M13 14h2" strokeWidth="2" /></StatusButton>
          <StatusCaret />
        </StatusGroup>
        <StatusGroup>
          <StatusButton name="正交"><path d="M2.5 1v15.500H17M2.5 11.500h5v5" /></StatusButton>
          <StatusButton name="极轴"><circle cx="8" cy="10" r="6" /><path d="M7 10.500h10M8 10l6-8" /></StatusButton>
          <StatusCaret />
          <StatusButton name="等轴测"><path d="M2 3l14 13" stroke="#d33" /><path d="M9.5 1v16" stroke="#3a8f3a" /><path d="M8 8h3v3H8z" stroke="#3a8f3a" /></StatusButton>
          <StatusCaret />
          <StatusButton name="对象捕捉追踪" on><path d="M2 15.500h15M3 14L15 2M8 7.500h3v3H8z" /></StatusButton>
          <StatusButton name="对象捕捉" on><path d="M7 4.500h9.500v12h-12V8" /><path d="M1.500 1.500h5v5h-5z" /></StatusButton>
          <StatusCaret />
        </StatusGroup>
        <StatusGroup>
          <StatusButton name="注释可见性" on><path d={scaleMark} fill="#444" stroke="none" /><circle cx="14" cy="4" r="2.5" fill="#cce4f7" /></StatusButton>
          <StatusButton name="自动缩放"><path d={scaleMark} fill="#555" stroke="none" /><path d="M15 1l-3 4h3l-2 4 4-5h-3l3-3z" fill="#444" stroke="none" /></StatusButton>
          <StatusButton name="注释比例"><path d={scaleMark} fill="#555" stroke="none" /></StatusButton>
          <button className="flex h-[22px] items-center gap-1 pl-1 text-xs leading-4 text-[#333]">1:1<Caret /></button>
        </StatusGroup>
        <StatusGroup>
          <StatusButton name="切换工作空间">
            <circle cx="9" cy="9" r="4.5" strokeWidth="3" />
            <path d="M9 1v3M9 14v3M1 9h3M14 9h3M3.500 3.500l2 2M12.500 12.500l2 2M14.500 3.500l-2 2M5.500 12.500l-2 2" strokeWidth="3" />
          </StatusButton>
          <StatusCaret />
        </StatusGroup>
        <StatusGroup>
          <StatusButton name="注释监视器"><path d="M9 1v16M1 9h16" strokeWidth="2" /></StatusButton>
        </StatusGroup>
        <StatusGroup>
          <StatusButton name="隔离对象"><path d="M2.500 2.500h5v5h-5zM8 10.500l4 6H4z" /><circle cx="14" cy="7" r="3" /></StatusButton>
        </StatusGroup>
        <StatusGroup>
          <StatusButton name="硬件加速">
            <path d="M2 3c4-3 10-3 12 1v7H4c-2-2-3-5-2-8z" fill="#2b62a8" stroke="none" /><path d="M2 6h12M6 2v9M10 2v9" stroke="#8fb4e0" strokeWidth=".5" />
            <path d="M1 10h6v6H1z" fill="#f3c11b" stroke="none" /><path d="M8 12l3 3 6-6" stroke="#4fa83d" strokeWidth="3" />
          </StatusButton>
          <StatusButton name="图形性能">
            <path d="M1.500 2.500h14v12h-14z" /><path d="M2 11c3-9 5-7 7-3s4 2 5-3" stroke={BLUE} />
            <path d="M12 8l5.500 9h-11z" fill="#ee7623" stroke="none" /><path d="M12 11v3M12 15v1" stroke="#fff" />
          </StatusButton>
        </StatusGroup>
        <StatusGroup>
          <StatusButton name="全屏显示"><path d="M1.500 3.500h15v11h-15zM10 8l4-3M11 5.500h3V8M8 10l-4 3M4 10v3h3" /></StatusButton>
          <StatusButton name="自定义状态栏"><path d="M1 3h16M1 9h16M1 15h16" strokeWidth="2" /></StatusButton>
        </StatusGroup>
      </div>
    </footer>
  );
}

export default function App() {
  return (
    <div className="flex h-screen flex-col overflow-hidden bg-[#f4f4f4] font-['Open_Sans','Noto_Sans_CJK_SC',sans-serif]">
      <TitleBar />
      <Ribbon />
      <div className="h-1 shrink-0" />
      <PropertyBar />
      <div className="h-[3px] shrink-0" />
      <div className="flex min-h-0 flex-1 pr-[5px] pl-[3px]">
        <ToolColumn tools={drawTools} label="绘图" />
        <Workspace />
        <ToolColumn tools={modifyTools} label="修改" />
      </div>
      <StatusBar />
    </div>
  );
}
